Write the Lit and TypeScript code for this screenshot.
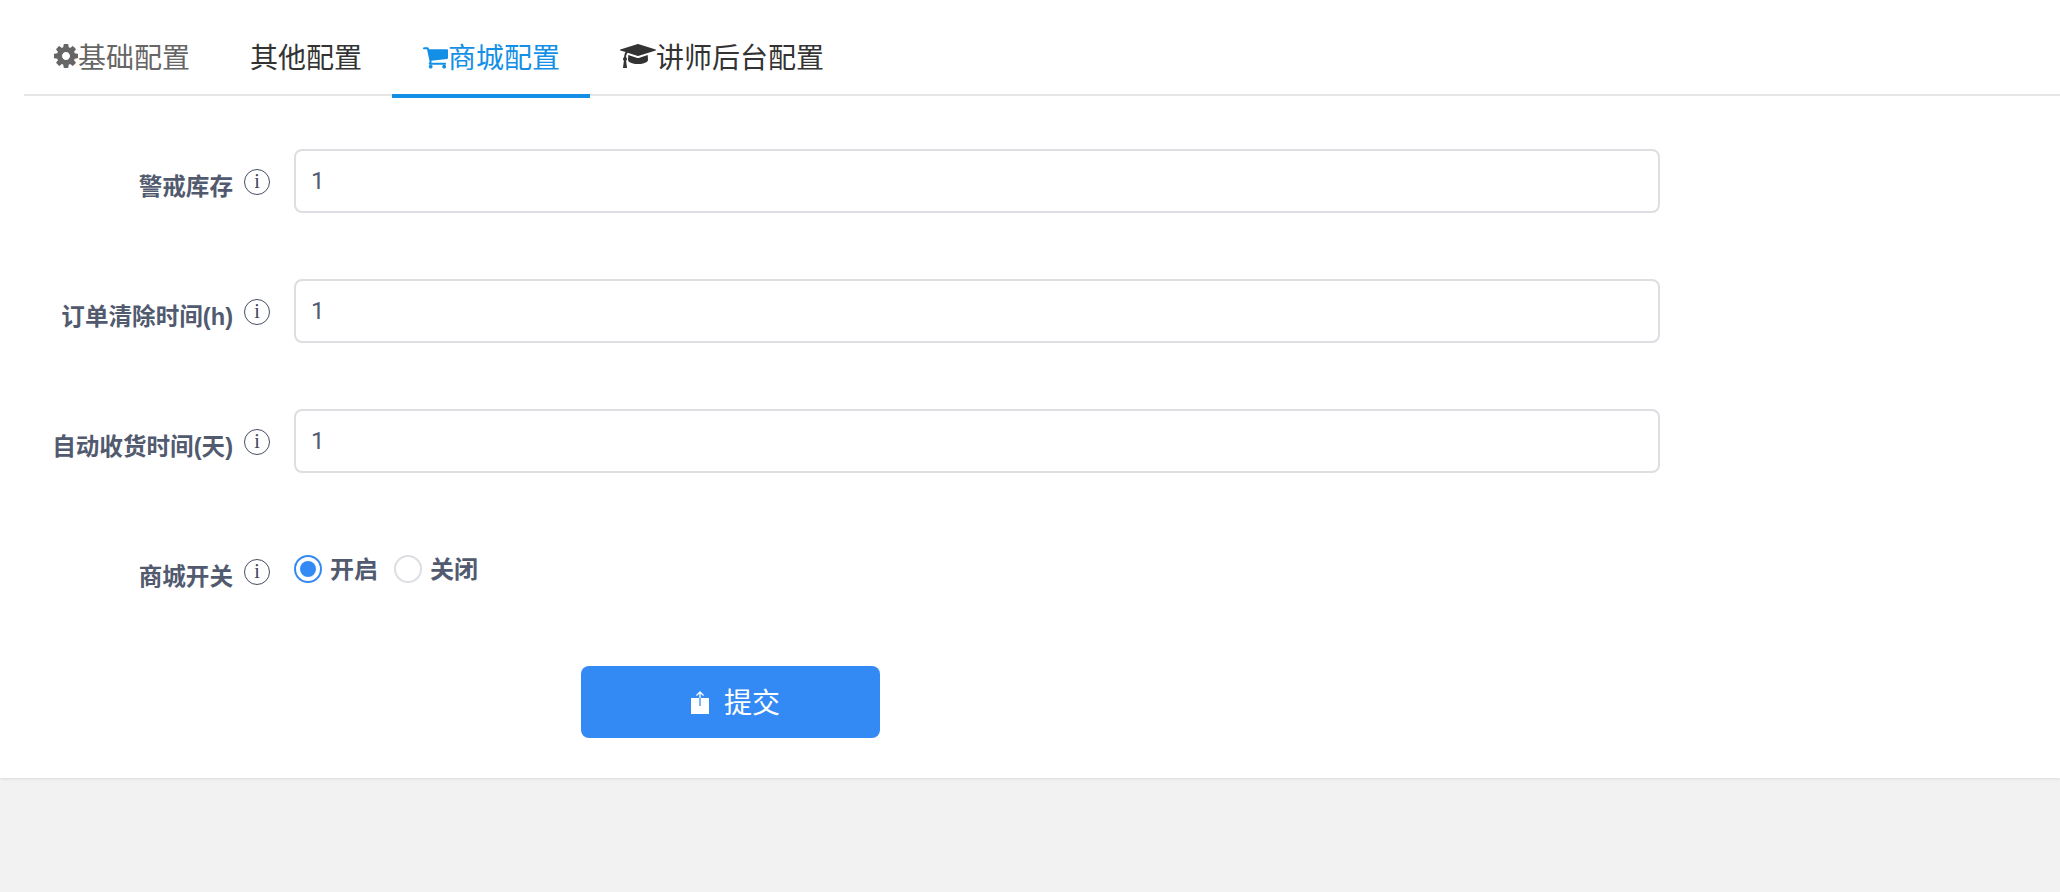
import { LitElement, html, css, svg } from "lit";
import { customElement } from "lit/decorators.js";

const cog = svg`<path d="M1152 896q0-106-75-181t-181-75-181 75-75 181 75 181 181 75 181-75 75-181zm512-109v222q0 12-8 23t-20 13l-185 28q-19 54-39 91 35 50 107 138 10 12 10 25t-9 23q-27 37-99 108t-94 71q-12 0-26-9l-138-108q-44 23-91 38-16 136-29 186-7 28-36 28h-222q-14 0-24.500-8.500t-11.500-21.500l-28-184q-49-16-90-37l-141 107q-10 9-25 9-14 0-25-11-126-114-165-168-7-10-7-23 0-12 8-23 15-21 51-66.500t54-70.500q-27-50-41-99l-183-27q-13-2-21-12.500t-8-23.500v-222q0-12 8-23t19-13l186-28q14-46 39-92-40-57-107-138-10-12-10-24 0-10 9-23 26-36 98.500-107.500t94.500-71.500q13 0 26 10l138 107q44-23 91-38 16-136 29-186 7-28 36-28h222q14 0 24.500 8.500t11.500 21.500l28 184q49 16 90 37l142-107q9-9 24-9 13 0 25 10 129 119 165 170 7 8 7 22 0 12-8 23-15 21-51 66.500t-54 70.500q26 50 41 98l183 28q13 2 21 12.500t8 23.500z"/>`;
const cart = svg`<path d="M704 1536q0 52-38 90t-90 38-90-38-38-90 38-90 90-38 90 38 38 90zm896 0q0 52-38 90t-90 38-90-38-38-90 38-90 90-38 90 38 38 90zm128-1088v512q0 24-16.500 42.500t-40.500 21.500l-1044 122q13 60 13 70 0 16-24 64h920q26 0 45 19t19 45-19 45-45 19h-1024q-26 0-45-19t-19-45q0-11 8-31.500t16-36 21.500-40 15.500-29.500l-177-823h-204q-26 0-45-19t-19-45 19-45 45-19h256q16 0 28.500 6.500t19.500 15.500 13 24.500 8 26 5.500 29.500 4.500 26h1201q26 0 45 19t19 45z"/>`;
const cap = svg`<path d="M1774 836l18 316q4 69-82 128t-235 93.500-323 34.500-323-34.500-235-93.500-82-128l18-316 574 181q22 7 48 7t48-7zm530-324q0 23-22 31l-1120 352q-4 1-10 1t-10-1l-652-206q-43 34-71 111.500t-34 178.500q63 36 63 109 0 69-58 107l58 433q2 14-8 25-9 11-24 11h-192q-15 0-24-11-10-11-8-25l58-433q-58-38-58-107 0-73 65-111 11-207 98-330l-333-104q-22-8-22-31t22-31l1120-352q4-1 10-1t10 1l1120 352q22 8 22 31z"/>`;

@customElement("app-root")
export class AppRoot extends LitElement {
  static styles = css`
    :host {
      display: block;
      min-height: 892px;
      background: #f2f2f2;
      font-family: "Liberation Sans", "Noto Sans CJK SC", sans-serif;
    }
    .card {
      background: #fff;
      height: 778px;
      box-sizing: border-box;
      padding-left: 24px;
      box-shadow: 0 1px 3px rgba(0, 0, 0, 0.1);
    }
    .tabs {
      display: flex;
      height: 96px;
      box-sizing: border-box;
      border-bottom: 2px solid #e5e5e5;
    }
    .tab {
      display: flex;
      align-items: center;
      height: 98px;
      box-sizing: border-box;
      padding: 18px 30px 0;
      font-size: 28px;
      color: #333;
      border-bottom: 4px solid transparent;
      white-space: nowrap;
    }
    .tab.first { color: #666; }
    .tab.active { color: #1390e5; border-bottom-color: #1390e5; }
    .tab svg { fill: currentColor; display: block; }
    .tab.active svg { margin-top: 2px; }
    .form { padding-top: 53px; }
    .row {
      display: flex;
      margin-bottom: 66px;
      margin-left: -24px;
      height: 64px;
    }
    .label {
      width: 294px;
      flex: none;
      box-sizing: border-box;
      display: flex;
      justify-content: flex-end;
      padding-right: 24px;
      color: #515a6e;
      font-size: 23.6px;
      font-weight: 600;
      line-height: 32px;
    }
    .label span { margin-top: 22px; }
    .info {
      width: 26px;
      height: 26px;
      box-sizing: border-box;
      margin: 20px 0 0 11px;
      border: 1.5px solid #454d60;
      border-radius: 50%;
      font: 400 20px/23px "Liberation Serif", serif;
      text-align: center;
      color: #3d4456;
    }
    input {
      width: 1366px;
      height: 64px;
      box-sizing: border-box;
      border: 2px solid #dcdee2;
      border-radius: 8px;
      padding: 0 15px;
      font: 24px Roboto, "Liberation Sans", sans-serif;
      color: #515a6e;
      outline: none;
      background: #fff;
    }
    .radios {
      display: flex;
      align-items: center;
      height: 28px;
      margin-top: 16px;
      color: #515a6e;
      font-size: 24px;
      font-weight: 600;
    }
    .radio {
      width: 28px;
      height: 28px;
      box-sizing: border-box;
      border: 2px solid #dcdee2;
      border-radius: 50%;
      margin-right: 8px;
      display: flex;
      align-items: center;
      justify-content: center;
    }
    .radio.on { border-color: #348af5; }
    .radio.on::after {
      content: "";
      width: 16px;
      height: 16px;
      border-radius: 50%;
      background: #348af5;
    }
    .opt { margin-right: 16px; margin-top: -4px; }
    .submit {
      display: flex;
      align-items: center;
      justify-content: center;
      gap: 15px;
      margin: 0 0 0 557px;
      width: 299px;
      height: 72px;
      border: 0;
      border-radius: 8px;
      background: #348af5;
      color: #fff;
      font: 28px "Liberation Sans", "Noto Sans CJK SC", sans-serif;
      padding: 0 0 0 10px;
    }
    .submit svg { display: block; }
    .submit span { margin-top: -3px; }
    .row.last { margin-bottom: 63px; }
  `;

  private row(label: string) {
    return html`<div class="row">
      <div class="label"><span>${label}</span><div class="info">i</div></div>
      <input .value=${"1"} />
    </div>`;
  }

  render() {
    return html`<div class="card">
      <div class="tabs">
        <div class="tab first">
          <svg width="24" height="24" viewBox="128 128 1536 1536">${cog}</svg>基础配置
        </div>
        <div class="tab">其他配置</div>
        <div class="tab active">
          <svg width="26" height="24" viewBox="0 128 1728 1536">${cart}</svg>商城配置
        </div>
        <div class="tab">
          <svg width="36" height="28" viewBox="0 0 2304 1792">${cap}</svg>讲师后台配置
        </div>
      </div>
      <div class="form">
        ${this.row("警戒库存")} ${this.row("订单清除时间(h)")} ${this.row("自动收货时间(天)")}
        <div class="row last">
          <div class="label"><span>商城开关</span><div class="info">i</div></div>
          <div class="radios">
            <div class="radio on"></div><span class="opt">开启</span>
            <div class="radio"></div><span class="opt">关闭</span>
          </div>
        </div>
        <button class="submit">
          <svg width="18" height="23" viewBox="0 0 18 23" fill="none">
            <rect x="0" y="7" width="18" height="16" fill="#fff" />
            <path d="M9 7V1M5.500 4.500L9 1l3.500 3.500" stroke="#fff" stroke-width="1.3" />
            <path d="M9 7v8" stroke="#348af5" stroke-width="1.3" />
          </svg>
          <span>提交</span>
        </button>
      </div>
    </div>`;
  }
}
